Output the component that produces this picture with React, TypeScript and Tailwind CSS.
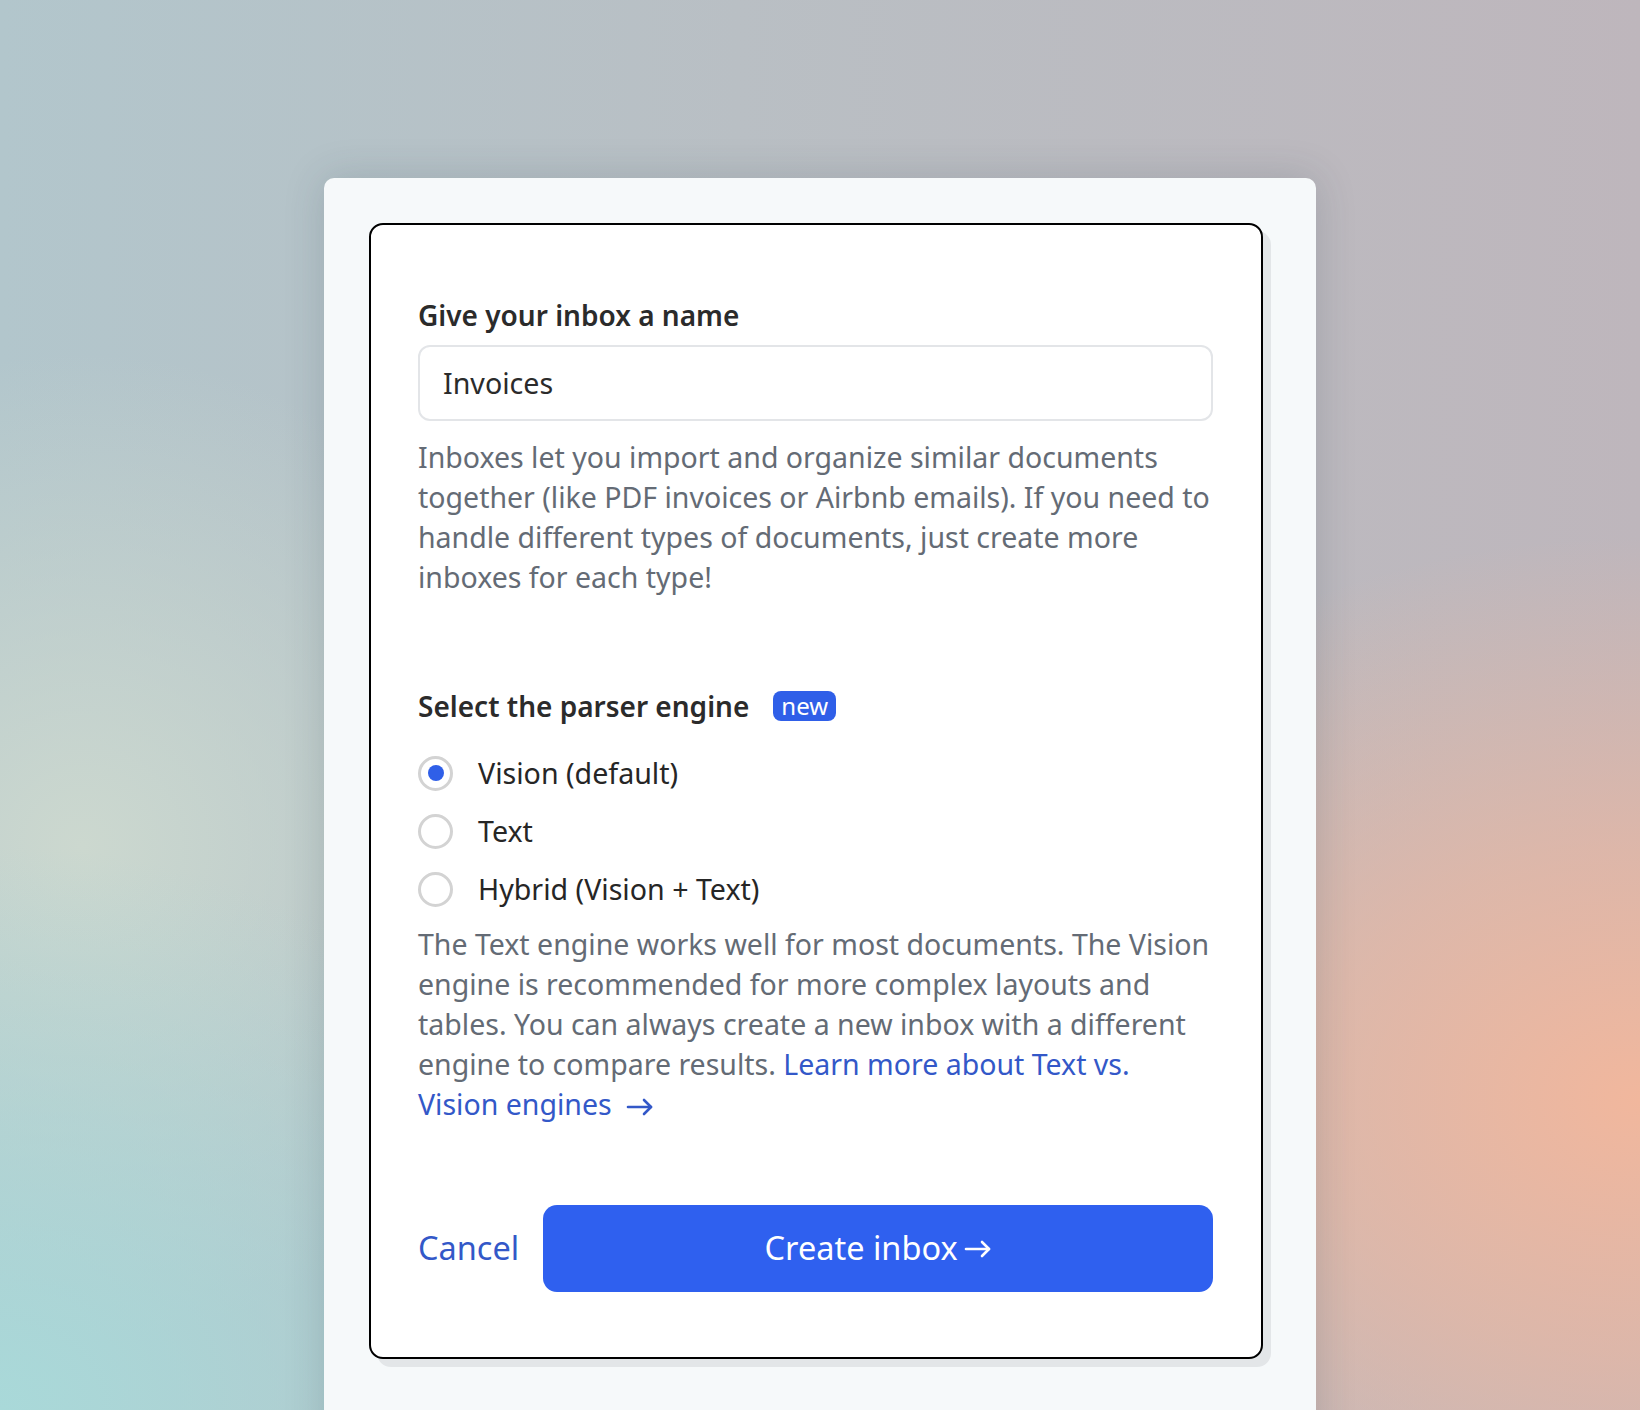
import React from "react";

function Arrow({ className }: { className?: string }) {
  return (
    <svg className={className} viewBox="0 0 28 18" fill="none" stroke="currentColor" strokeWidth="2.6" strokeLinecap="round" strokeLinejoin="round">
      <path d="M2 9h23" />
      <path d="M18 2l7 7-7 7" />
    </svg>
  );
}

function Radio({ checked, label }: { checked?: boolean; label: string }) {
  return (
    <div className="flex h-[58px] items-center">
      <div className="flex h-[35px] w-[35px] items-center justify-center rounded-full border-[3px] border-[#d3d3d3] bg-white">
        {checked && <div className="h-[16px] w-[16px] rounded-full bg-[#2f5fe8]" />}
      </div>
      <span className="ml-[25px] text-[28.6px] leading-[40px] text-[#262626]">{label}</span>
    </div>
  );
}

export default function App() {
  return (
    <div
      className="flex h-[1410px] w-full justify-center overflow-hidden pt-[178px] bg-[radial-gradient(ellipse_45%_40%_at_100%_78%,#f1b79d_0%,rgba(241,183,157,0.6)_45%,rgba(241,183,157,0)_100%),radial-gradient(ellipse_40%_40%_at_0%_100%,#a9d9d9_0%,rgba(169,217,217,0)_100%),radial-gradient(ellipse_30%_35%_at_5%_60%,#ccd8cf_0%,rgba(204,216,207,0)_100%),linear-gradient(90deg,#b2c6cc_0%,#b9bfc4_45%,#beb6bc_100%)]"
      style={{ fontFamily: '"Noto Sans", "Open Sans", sans-serif' }}
    >
      <div className="h-[1300px] w-[992px] shrink-0 rounded-t-[10px] bg-[#f6f9fa] pl-[45px] pr-[53px] pt-[45px] shadow-[0_0_40px_rgba(40,60,70,0.18)]">
        <div className="rounded-[14px] border-2 border-black bg-white pb-[65px] pl-[47px] pr-[48px] pt-[70px] shadow-[8px_8px_0_#e3e6e8]">
          <label className="block text-[28px] font-semibold leading-[40px] text-[#2b2b2b]">Give your inbox a name</label>
          <div className="mt-[10px] flex h-[76px] items-center rounded-[12px] border-2 border-[#e3e5e8] bg-white px-[23px] text-[28.6px] text-[#2b2b2b]">
            Invoices
          </div>
          <p className="mt-[16px] text-[28.5px] leading-[40px] text-[#646b75]">
            Inboxes let you import and organize similar documents together (like PDF invoices or Airbnb emails). If you need to handle different types of documents, just create more inboxes for each type!
          </p>

          <div className="mt-[89px] flex items-center">
            <span className="text-[28px] font-semibold leading-[40px] text-[#2b2b2b]">Select the parser engine</span>
            <span className="ml-[24px] flex h-[30px] items-center rounded-[8px] bg-[#2f5fe8] px-[8px] text-[24px] leading-none text-white">new</span>
          </div>

          <div className="mt-[18px] flex flex-col">
            <Radio checked label="Vision (default)" />
            <Radio label="Text" />
            <Radio label="Hybrid (Vision + Text)" />
          </div>

          <p className="mt-[6px] text-[28.5px] leading-[40px] text-[#646b75]">
            The Text engine works well for most documents. The Vision engine is recommended for more complex layouts and tables. You can always create a new inbox with a different engine to compare results.{" "}
            <a className="text-[#3358c8]">
              Learn more about Text vs.
              <br />
              Vision engines
              <Arrow className="ml-[14px] inline-block h-[18px] w-[28px] align-[-1px]" />
            </a>
          </p>

          <div className="mt-[81px] flex items-center">
            <span className="text-[32.5px] text-[#3358c8]">Cancel</span>
            <button className="ml-[24px] flex h-[87px] flex-1 items-center justify-center rounded-[14px] bg-[#2f60ef] text-[32.5px] text-white">
              Create inbox
              <Arrow className="ml-[6px] h-[18px] w-[28px]" />
            </button>
          </div>
        </div>
      </div>
    </div>
  );
}
